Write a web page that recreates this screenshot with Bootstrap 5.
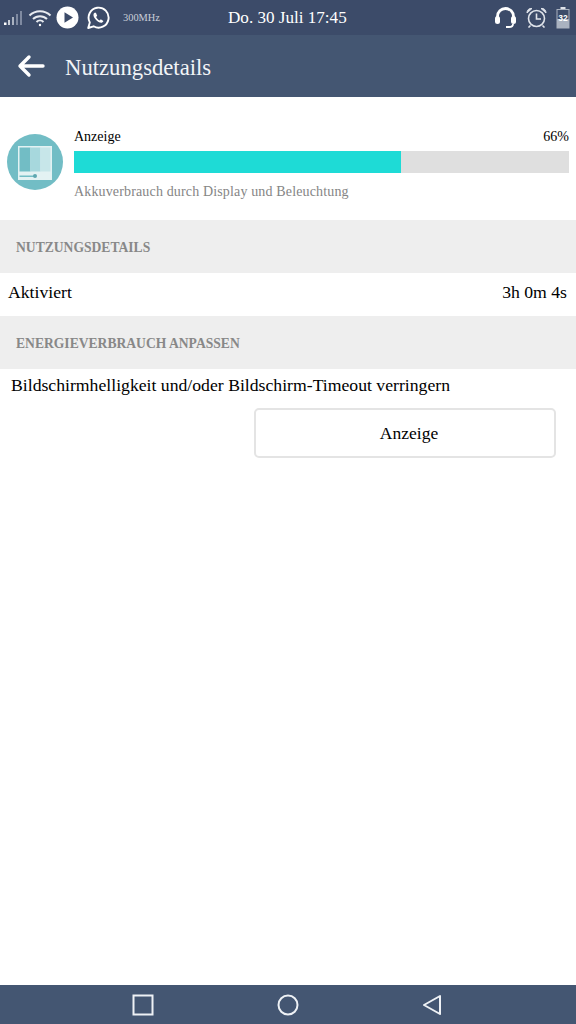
<!DOCTYPE html>
<html lang="de">
<head>
<meta charset="utf-8">
<title>Nutzungsdetails</title>
<link href="https://cdn.jsdelivr.net/npm/bootstrap@5.3.0/dist/css/bootstrap.min.css" rel="stylesheet">
<style>
html,body{height:100%;}
body{font-family:"Liberation Serif",serif;color:#000;background:#fff;}
.shell{height:1024px;}
.statusbar{height:35px;background:#3c4b69;color:#fff;padding:0 6px 0 4px;}
.statusbar svg{display:block;}
.status-left{width:221px;}
.mhz{font-size:10.400px;color:#c9ced8;margin-left:13px;}
.clock{font-size:17.100px;line-height:35px;margin-left:3px;}
.status-right{margin-left:auto;gap:9px;}
.appbar{height:62px;background:#445672;color:#fff;padding-left:17px;gap:20px;}
.appbar-title{font-size:22.700px;line-height:1;color:#f2f4f7;padding-top:4px;}
.usage{height:123px;padding:7px 7px 0;gap:11px;}
.usage-body{flex:1;padding-top:3px;}
.usage-head{font-size:14px;line-height:15px;margin-bottom:7px;}
.meter{height:22px;background:#dfdfdf;border-radius:0;}
.meter .progress-bar{background:#1edbd6;}
.usage-note{font-size:14px;line-height:15px;color:#858585;margin-top:11px;letter-spacing:.15px;}
.sect{background:#eee;color:#888;font-weight:700;font-size:13.600px;padding:3px 0 0 16px;}
.sect-a{height:53px;}
.sect-b{height:53px;}
.row-line{height:43px;font-size:17.700px;padding:0 9px 5px 8px;}
.hint{font-size:17.700px;line-height:20px;padding:6px 0 0 11px;}
.btn-wrap{padding:13px 20px 0 0;}
.btn-anz{width:302px;height:50px;font-family:inherit;font-size:17.500px;color:#000;background:#fff;border:2px solid #e4e4e4;border-radius:5px;padding:0 0 0 8px;}
.navbar-bottom{height:39px;background:#445672;padding:0 0 0 132px;}
.nav-slot{width:145px;}
</style>
</head>
<body>
<div class="shell d-flex flex-column">
  <div class="statusbar d-flex align-items-center">
    <div class="status-left d-flex align-items-center">
      <svg width="20" height="20" viewBox="0 0 20 20" fill="#7f8aa1"><rect x="0" y="14.500" width="2.500" height="2.500" fill="#fff"/><rect x="4" y="12" width="2" height="5" fill="#c9ced8"/><rect x="8" y="9" width="2" height="8" fill="#aab2c0"/><rect x="12" y="6" width="2" height="11"/><rect x="16" y="3" width="2" height="14"/></svg>
      <svg class="ms-1" width="24" height="20" viewBox="0 0 24 20" fill="none" stroke="#e8ebf0" stroke-width="2"><path d="M1.5 7.5a15 15 0 0 1 21 0"/><path d="M5 11a10 10 0 0 1 14 0"/><path d="M8.5 14a5 5 0 0 1 7 0"/><circle cx="12" cy="17" r="1.2" fill="#fff" stroke="none"/></svg>
      <svg class="ms-1" width="23" height="23" viewBox="0 0 23 23"><circle cx="11.5" cy="11.5" r="11" fill="#fff"/><path d="M8.500 6.300v10.400l8.500-5.200z" fill="#3c4b69"/></svg>
      <svg style="margin-left:7px" width="24" height="24" viewBox="0 0 24 24" fill="none"><path d="M2.2 22l1.6-5.6A10 10 0 1 1 7.6 20.3z" stroke="#fff" stroke-width="1.900" stroke-linejoin="round"/><path d="M8.6 6.800c-1.400.9-1.500 2.800-.4 4.800 1.200 2.200 3.400 4.200 5.600 4.900 1.600.5 3.200-.2 3.600-1.600l-2.600-1.600-1.200 1.100c-1.400-.6-2.900-2.100-3.500-3.500l1.100-1.200-1.300-2.900z" fill="#fff"/></svg>
      <span class="mhz">300MHz</span>
    </div>
    <span class="clock">Do. 30 Juli 17:45</span>
    <div class="status-right d-flex align-items-center">
      <svg width="23" height="23" viewBox="0 0 23 23" fill="none"><path d="M3.500 13V10.500a8 8 0 0 1 16 0V13" stroke="#fff" stroke-width="2.800"/><rect x="1" y="10" width="5" height="8" rx="2.500" fill="#fff"/><rect x="17" y="10" width="5" height="8" rx="2.500" fill="#fff"/><path d="M19 18c0 2-2 3-4 3h-3" stroke="#fff" stroke-width="1.800"/></svg>
      <svg width="21" height="21" viewBox="0 0 21 21" fill="none" stroke="#dfe3ea" stroke-width="1.600"><circle cx="10.500" cy="11.500" r="8"/><path d="M10.500 6.500v5.500h4.500"/><path d="M1 6 C1 3 3 1 6 1.500z M20 6 C20 3 18 1 15 1.500z" fill="#dfe3ea" stroke-width="1"/><path d="M4.500 18.500l-2 2M16.500 18.500l2 2"/></svg>
      <svg width="14" height="22" viewBox="0 0 14 22"><rect x="4.500" y="0" width="5" height="2" fill="#dfe3ea"/><rect x="1" y="2.500" width="12" height="18.500" fill="none" stroke="#aab2c0"/><rect x="1" y="12" width="12" height="9" fill="#aab2c0"/><text x="7" y="13.500" font-size="8.500" font-family="Liberation Sans" font-weight="700" text-anchor="middle" fill="#fff">32</text></svg>
    </div>
  </div>

  <div class="appbar d-flex align-items-center">
    <svg width="28" height="24" viewBox="0 0 28 24" fill="none" stroke="#fff" stroke-width="3.400" stroke-linecap="round" stroke-linejoin="round"><path d="M26 12H3M12 3l-9 9 9 9"/></svg>
    <span class="appbar-title">Nutzungsdetails</span>
  </div>

  <div class="usage d-flex align-items-center">
    <svg width="56" height="56" viewBox="0 0 56 56" class="flex-shrink-0"><circle cx="28" cy="28" r="28" fill="#72bdc5"/><rect x="11" y="12" width="34" height="34" fill="#e3f2f3"/><rect x="12.500" y="13.500" width="11" height="24" fill="#72bdc5"/><rect x="23.500" y="13.500" width="10" height="24" fill="#a7d8dd"/><rect x="33.500" y="13.500" width="10" height="24" fill="#c7e6e9"/><rect x="12.500" y="41.500" width="16" height="1.500" fill="#72bdc5"/><circle cx="28" cy="42" r="2" fill="#5ea7b0"/></svg>
    <div class="usage-body">
      <div class="usage-head d-flex justify-content-between"><span>Anzeige</span><span>66%</span></div>
      <div class="progress meter"><div class="progress-bar" style="width:66%"></div></div>
      <div class="usage-note">Akkuverbrauch durch Display und Beleuchtung</div>
    </div>
  </div>

  <div class="sect sect-a d-flex align-items-center">NUTZUNGSDETAILS</div>
  <div class="row-line d-flex justify-content-between align-items-center"><span>Aktiviert</span><span>3h 0m 4s</span></div>
  <div class="sect sect-b d-flex align-items-center">ENERGIEVERBRAUCH ANPASSEN</div>
  <div class="hint">Bildschirmhelligkeit und/oder Bildschirm-Timeout verringern</div>
  <div class="btn-wrap d-flex justify-content-end"><button type="button" class="btn btn-anz">Anzeige</button></div>

  <div class="flex-grow-1"></div>

  <div class="navbar-bottom d-flex align-items-center">
    <div class="nav-slot"><svg width="22" height="22" viewBox="0 0 22 22" fill="none" stroke="#eef1f5" stroke-width="2" class="d-block"><rect x="1.500" y="1.500" width="19" height="19"/></svg></div>
    <div class="nav-slot"><svg width="22" height="22" viewBox="0 0 22 22" fill="none" stroke="#eef1f5" stroke-width="2" class="d-block"><circle cx="11" cy="11" r="9.500"/></svg></div>
    <div><svg width="20" height="22" viewBox="0 0 20 22" fill="none" stroke="#eef1f5" stroke-width="2" stroke-linejoin="round" class="d-block"><path d="M18 2 2 11l16 9z"/></svg></div>
  </div>
</div>
<script src="https://cdn.jsdelivr.net/npm/bootstrap@5.3.0/dist/js/bootstrap.bundle.min.js"></script>
</body>
</html>
